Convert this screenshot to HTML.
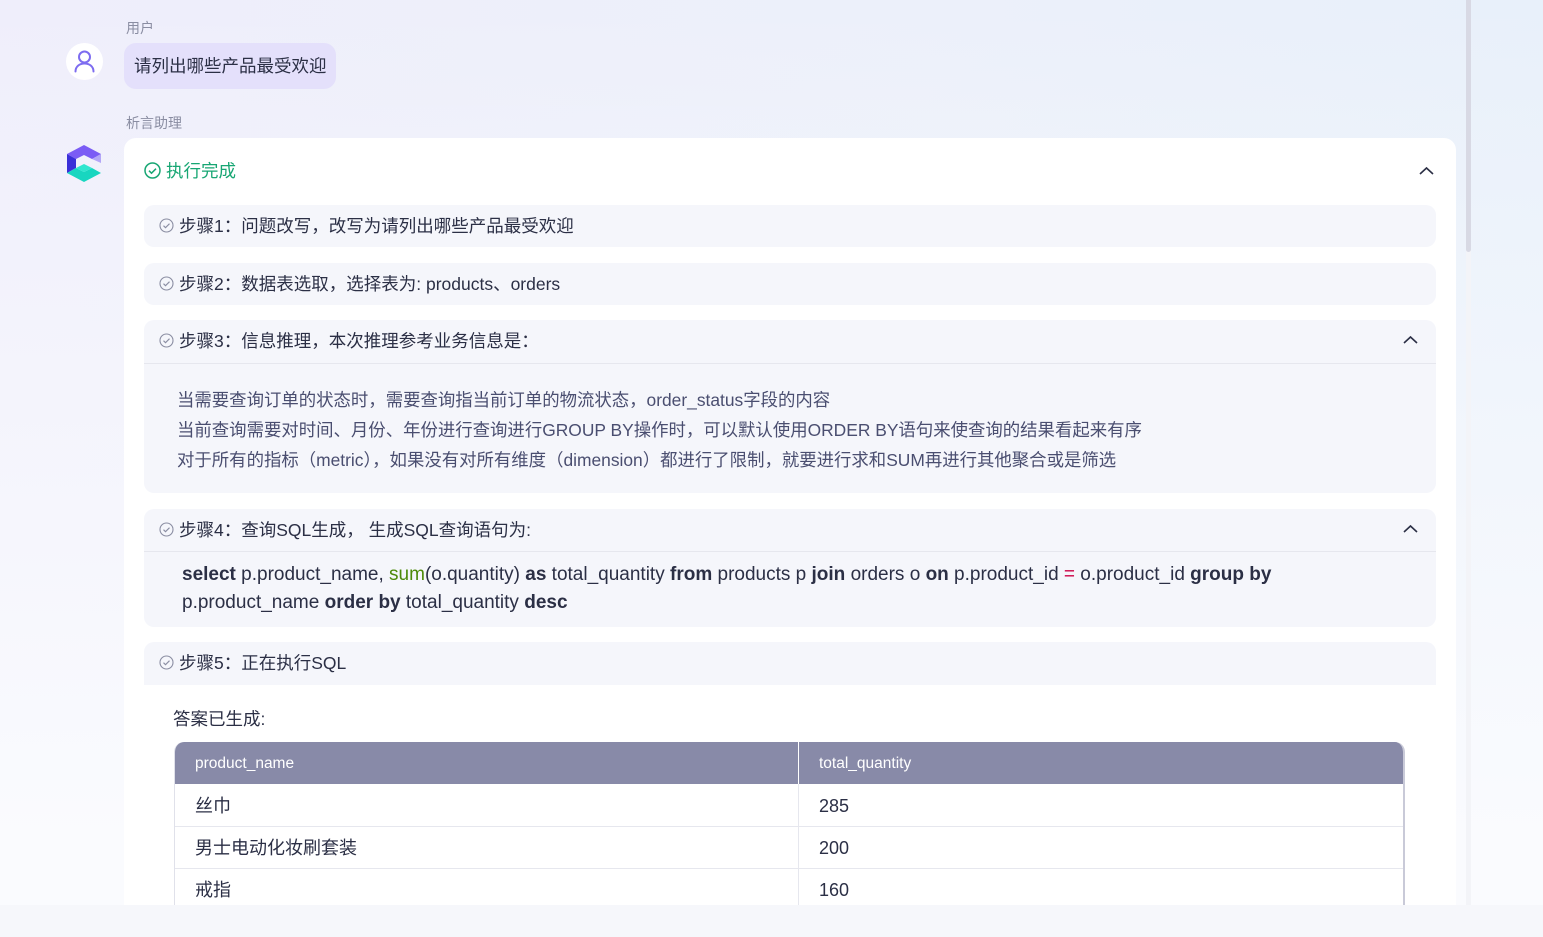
<!DOCTYPE html>
<html><head><meta charset="utf-8"><style>
*{box-sizing:border-box;margin:0;padding:0}
html,body{width:1543px;height:937px;overflow:hidden}
body{font-family:"Liberation Sans","Noto Sans CJK SC",sans-serif;background:linear-gradient(180deg,rgba(255,255,255,0) 0%,rgba(250,251,254,1) 90%),linear-gradient(90deg,#efeefb 0%,#ecf0fa 60%,#e8f0fa 100%);position:relative;color:#2b2f45}
.abs{position:absolute}
.lbl{font-size:14px;color:#8a8da2}
.step{position:absolute;left:144px;width:1292px;background:#f5f6fb;border-radius:10px}
.sh{height:42px;display:flex;align-items:center;padding-left:15px;font-size:17.5px;color:#2b2f45;padding-bottom:2px}
.ck{width:15px;height:15px;margin-right:5px}
.chev{position:absolute;right:18px;top:15px}
.line{border-top:1px solid #e6e7ee}
</style></head><body>
<div class="abs lbl" style="left:126px;top:18px">用户</div>
<div class="abs" style="left:66px;top:43px;width:37px;height:37px;border-radius:50%;background:#fff">
<svg width="37" height="37" viewBox="0 0 37 37"><circle cx="18.5" cy="14" r="5.5" fill="none" stroke="#7d6cf0" stroke-width="2"/><path d="M9.5 28.5c0-5 4-8 9-8s9 3 9 8" fill="none" stroke="#7d6cf0" stroke-width="2" stroke-linecap="round"/></svg></div>
<div class="abs" style="left:124px;top:43px;width:212px;height:46px;background:#e4e0fb;border-radius:12px;font-size:17.5px;line-height:46px;padding-left:10px;color:#2b2f45">请列出哪些产品最受欢迎</div>
<div class="abs lbl" style="left:126px;top:113px">析言助理</div>
<svg class="abs" style="left:67px;top:145px" width="35" height="38" viewBox="0 0 35 38"><path d="M17 0L34 9L25 14L17 10L9 14L0 9Z" fill="#7b5cf5"/><path d="M0 9L9 14V23L0 28Z" fill="#3a2fd8"/><path d="M17 10L25 14L34 9V18L25 14Z" fill="#b3a6f7"/><path d="M0 28L9 23L17 27L25 23L34 28L17 37Z" fill="#18d6c0"/><path d="M9 23L17 19L25 23L17 27Z" fill="#2fe6cf"/></svg>
<div class="abs" style="left:124px;top:138px;width:1332px;height:767px;background:#fff;border-radius:12px 12px 0 0"></div>
<div class="abs" style="left:144px;top:158px;display:flex;align-items:center;font-size:17.5px;color:#17a673"><svg width="17" height="17" viewBox="0 0 17 17" style="margin-right:5px"><circle cx="8.5" cy="8.5" r="7.5" fill="none" stroke="#17a673" stroke-width="1.5"/><path d="M5 8.7l2.5 2.5 4.5-4.5" fill="none" stroke="#17a673" stroke-width="1.5"/></svg>执行完成</div>
<svg class="abs" style="left:1419px;top:166px" width="15" height="9"><path d="M1 8L7.5 2L14 8" fill="none" stroke="#2b2f45" stroke-width="1.6"/></svg>

<div class="step" style="top:205px"><div class="sh"><svg class="ck" viewBox="0 0 15 15"><circle cx="7.5" cy="7.5" r="6.5" fill="none" stroke="#8a8da2" stroke-width="1.1"/><path d="M4.5 7.7l2 2 4-4" fill="none" stroke="#8a8da2" stroke-width="1.1"/></svg>步骤1：问题改写，改写为请列出哪些产品最受欢迎</div></div>
<div class="step" style="top:263px"><div class="sh"><svg class="ck" viewBox="0 0 15 15"><circle cx="7.5" cy="7.5" r="6.5" fill="none" stroke="#8a8da2" stroke-width="1.1"/><path d="M4.5 7.7l2 2 4-4" fill="none" stroke="#8a8da2" stroke-width="1.1"/></svg>步骤2：数据表选取，选择表为: products、orders</div></div>
<div class="step" style="top:320px;height:173px"><div class="sh" style="height:43px"><svg class="ck" viewBox="0 0 15 15"><circle cx="7.5" cy="7.5" r="6.5" fill="none" stroke="#8a8da2" stroke-width="1.1"/><path d="M4.5 7.7l2 2 4-4" fill="none" stroke="#8a8da2" stroke-width="1.1"/></svg>步骤3：信息推理，本次推理参考业务信息是：</div>
<svg class="chev" width="15" height="9"><path d="M1 8L7.5 2L14 8" fill="none" stroke="#2b2f45" stroke-width="1.6"/></svg>
<div class="line" style="padding:21px 0 0 33px;font-size:17.4px;line-height:30px;color:#4a4e70">当需要查询订单的状态时，需要查询指当前订单的物流状态，order_status字段的内容<br>当前查询需要对时间、月份、年份进行查询进行GROUP BY操作时，可以默认使用ORDER BY语句来使查询的结果看起来有序<br>对于所有的指标（metric），如果没有对所有维度（dimension）都进行了限制，就要进行求和SUM再进行其他聚合或是筛选</div></div>
<div class="step" style="top:509px;height:118px"><div class="sh"><svg class="ck" viewBox="0 0 15 15"><circle cx="7.5" cy="7.5" r="6.5" fill="none" stroke="#8a8da2" stroke-width="1.1"/><path d="M4.5 7.7l2 2 4-4" fill="none" stroke="#8a8da2" stroke-width="1.1"/></svg>步骤4：查询SQL生成， 生成SQL查询语句为:</div>
<svg class="chev" width="15" height="9"><path d="M1 8L7.5 2L14 8" fill="none" stroke="#2b2f45" stroke-width="1.6"/></svg>
<div class="line" style="padding:9px 0 0 38px;font-size:19px;line-height:28px;color:#2b2f45"><b>select</b> p.product_name, <span style="color:#4d8a0a">sum</span>(o.quantity) <b>as</b> total_quantity <b>from</b> products p <b>join</b> orders o <b>on</b> p.product_id <span style="color:#c04">=</span> o.product_id <b>group by</b><br>p.product_name <b>order by</b> total_quantity <b>desc</b></div></div>
<div class="step" style="top:642px;height:43px;border-radius:10px 10px 0 0"><div class="sh" style="height:43px"><svg class="ck" viewBox="0 0 15 15"><circle cx="7.5" cy="7.5" r="6.5" fill="none" stroke="#8a8da2" stroke-width="1.1"/><path d="M4.5 7.7l2 2 4-4" fill="none" stroke="#8a8da2" stroke-width="1.1"/></svg>步骤5：正在执行SQL</div></div>
<div class="abs" style="left:173px;top:706px;font-size:17.5px;color:#2b2f45">答案已生成:</div>
<div class="abs" style="left:174px;top:742px;width:1231px;height:163px;border-radius:10px 10px 0 0;overflow:hidden;border-right:2px solid #c9cad8;border-left:1px solid #e0e1ea">
<div style="display:flex;height:42px;background:#888aa8;color:#fff;font-size:15.5px;line-height:44px"><div style="width:624px;padding-left:20px;border-right:1px solid #fff">product_name</div><div style="padding-left:20px">total_quantity</div></div>
<div style="display:flex;height:43px;font-size:18px;line-height:44px;border-bottom:1px solid #e6e7ee"><div style="width:624px;padding-left:20px;border-right:1px solid #e6e7ee">丝巾</div><div style="padding-left:20px">285</div></div>
<div style="display:flex;height:42px;font-size:18px;line-height:43px;border-bottom:1px solid #e6e7ee"><div style="width:624px;padding-left:20px;border-right:1px solid #e6e7ee">男士电动化妆刷套装</div><div style="padding-left:20px">200</div></div>
<div style="display:flex;height:42px;font-size:18px;line-height:43px"><div style="width:624px;padding-left:20px;border-right:1px solid #e6e7ee">戒指</div><div style="padding-left:20px">160</div></div>
</div>
<div class="abs" style="left:0;top:905px;width:1543px;height:32px;background:#f6f7fb"></div>
<div class="abs" style="left:1466px;top:0;width:5px;height:905px;background:#f3f4f8"></div>
<div class="abs" style="left:1466px;top:0;width:5px;height:252px;background:#d8d9e4;border-radius:0 0 3px 3px"></div>
</body></html>
